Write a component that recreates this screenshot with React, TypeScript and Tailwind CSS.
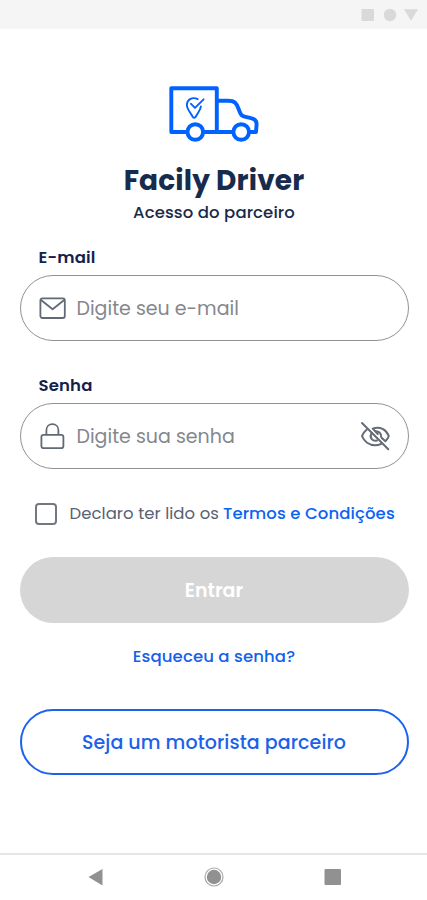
import React from "react";

function Truck() {
  return (
    <svg className="block h-[60px] w-[94px] shrink-0" viewBox="167 84 94 60" fill="none" stroke="#0062ff" strokeWidth="3.9" strokeLinejoin="round">
      <path d="M187 132H171.3V88.2H216.8V132M203.5 132H233M218.5 100.7H228C234.5 100.7 236.4 103 238.6 109C240.8 115.2 241.5 116.2 246.5 117.2C253 118.4 256.6 119.2 256.6 124.3L256 132H249.5" />
      <circle cx="195.3" cy="132" r="7.8" />
      <circle cx="241.2" cy="132" r="7.8" />
      <path strokeWidth="1.9" strokeLinecap="round" d="M197.7 99.1C192 96.3 186.7 100 186.9 105.3C187.1 109.5 190.5 112.6 192.1 115.7Q194.2 119.8 196.3 115.7C197.9 112.5 200.6 109.9 200.9 106.4M191 103.8L195 107.9L203.6 99.3" />
    </svg>
  );
}

function Mail() {
  return (
    <svg className="block h-6 w-7 shrink-0" viewBox="0 0 28 24" fill="none" stroke="#626a76" strokeWidth="1.8" strokeLinejoin="round" strokeLinecap="round">
      <rect x="1.4" y="2.4" width="24.4" height="19.6" rx="2" />
      <path d="M2 4L13.6 13.2L25.2 4" />
    </svg>
  );
}

function Lock() {
  return (
    <svg className="block h-7 w-7 shrink-0" viewBox="0 0 28 28" fill="none" stroke="#626a76" strokeWidth="1.8" strokeLinejoin="round">
      <rect x="2.4" y="12.9" width="22" height="13.3" rx="2.2" />
      <path d="M7.4 12.7V8.2C7.4 4.7 10 2.2 13.4 2.2S19.4 4.7 19.4 8.2V12.7" />
    </svg>
  );
}

function EyeOff() {
  return (
    <svg className="block h-[30px] w-[30px] shrink-0" viewBox="360 421 30 30" fill="none" stroke="#666c75" strokeWidth="2" strokeLinecap="round" strokeLinejoin="round">
      <path d="M362 423L388.3 449.2" />
      <path d="M366.6 429.8C364.4 431.6 362.7 433.9 362 436C364 441.6 369.3 445.3 375 445.3C377.4 445.3 379.4 444.8 381.2 443.9" />
      <path d="M377.8 434L372.8 428.6C380 425.7 386.4 430 388.8 436C388.1 438 387 439.8 385.4 441.3L381.8 437.9" />
      <path d="M371.2 433.9C369.3 437.7 372.7 441.7 377 440.5M375.6 431.2C378.6 431 381.2 433 381.2 436.9" />
    </svg>
  );
}

export default function App() {
  return (
    <div className="flex h-[900px] w-[427px] flex-col overflow-hidden bg-white font-['Poppins','Inter',sans-serif]">
      <header className="flex h-[29px] shrink-0 items-center justify-end bg-[#f5f5f5] pr-[8px]">
        <svg className="block h-[14px] w-[59px]" viewBox="0 0 59 14" fill="#d9d9d9">
          <rect x="1.5" y="1" width="12.5" height="12" rx="0.8" />
          <circle cx="30" cy="7" r="6.2" />
          <path d="M44 1.2H58L51 12.8Z" />
        </svg>
      </header>

      <main className="flex h-[824px] shrink-0 flex-col pt-[55px] pr-[18.5px] pl-[19.5px]">
        <div className="flex flex-col items-center">
          <Truck />
          <h1 className="mt-[17px] h-10 text-[28px] leading-10 font-bold tracking-[0.15px] whitespace-nowrap text-[#172b4d]">Facily Driver</h1>
          <p className="mt-px h-[22px] text-[16.5px] leading-[22px] font-medium tracking-[0.1px] whitespace-nowrap text-[#172b4d]">Acesso do parceiro</p>
        </div>

        <label className="mt-[23px] ml-[19px] h-[22px] text-[16.5px] leading-[22px] font-semibold tracking-[0.15px] text-[#14214d]">E-mail</label>
        <div className="mt-[6px] flex h-[66px] shrink-0 items-center rounded-[33px] border border-[#929292] pl-[18px]">
          <Mail />
          <span className="mt-px ml-[10px] text-[19px] leading-6 whitespace-nowrap text-[#83878d]">Digite seu e-mail</span>
        </div>

        <label className="mt-[34px] ml-[19px] h-[22px] text-[16.5px] leading-[22px] font-semibold tracking-[0.15px] text-[#14214d]">Senha</label>
        <div className="mt-[6px] flex h-[66px] shrink-0 items-center rounded-[33px] border border-[#929292] pr-[18px] pl-[18px]">
          <Lock />
          <span className="mt-px ml-[10px] text-[19px] leading-6 whitespace-nowrap text-[#83878d]">Digite sua senha</span>
          <span className="ml-auto"><EyeOff /></span>
        </div>

        <div className="mt-[33px] ml-[15px] flex h-[24px] items-center text-[16.5px] leading-[22px] whitespace-nowrap">
          <span className="h-[22px] w-[22px] shrink-0 rounded-[4px] border-2 border-[#737780]" />
          <span className="ml-[13px] w-[153.5px] tracking-[0.05px] text-[#596175]">Declaro ter lido os</span>
          <a className="font-medium tracking-[0.1px] text-[#0b63f3]">Termos e Condições</a>
        </div>

        <button className="mt-[31px] h-[66px] shrink-0 rounded-[33px] bg-[#d6d6d6] pt-[2px] text-[19px] font-semibold text-white">Entrar</button>
        <a className="mt-[23px] h-[22px] text-center text-[16.5px] leading-[22px] font-medium tracking-[0.1px] text-[#1262ea]">Esqueceu a senha?</a>
        <button className="mt-[41px] h-[66px] shrink-0 rounded-[33px] border-2 border-[#1b62ef] pt-[3px] text-[19px] font-medium tracking-[0.08px] whitespace-nowrap text-[#1b62ea]">Seja um motorista parceiro</button>
      </main>

      <nav className="h-[47px] shrink-0 border-t-2 border-[#e6e6e6]">
        <svg className="mx-auto mt-[10px] block h-6 w-[256px]" viewBox="86 865 256 24" fill="#919191">
          <path d="M88.5 877L102.5 869V885.5Z" />
          <circle cx="214" cy="877" r="9" fill="none" stroke="#a8a8a8" strokeWidth="1.2" />
          <circle cx="214" cy="877" r="7.2" />
          <rect x="324.5" y="869" width="16.5" height="16" rx="1" />
        </svg>
      </nav>
    </div>
  );
}
